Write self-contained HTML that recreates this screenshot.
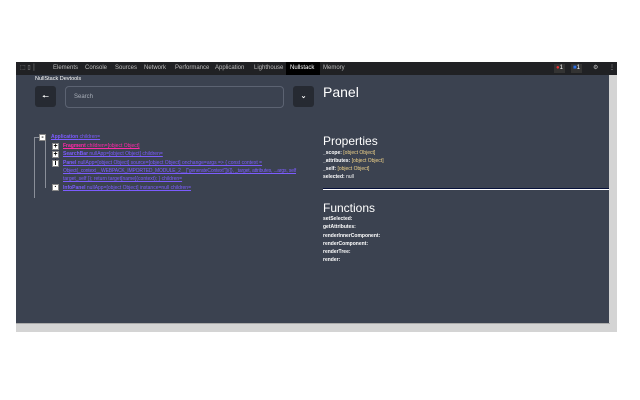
<!DOCTYPE html>
<html><head><meta charset="utf-8"><style>
*{margin:0;padding:0;box-sizing:border-box}
body{width:640px;height:400px;background:#fff;position:relative;font-family:"Liberation Sans",sans-serif;overflow:hidden}
.a{position:absolute}
.dk{left:16px;top:62px;width:601px;height:270px;background:#3b4250}
.tb{left:16px;top:62px;width:601px;height:13px;background:#202124;color:#bdbdbd;font-size:6px;line-height:13px}
.tb span{position:absolute;top:0}
.btn{background:#262a32;border-radius:3px}
.t{color:#7c5cff;font-size:5px;line-height:8.3px;text-decoration:underline;white-space:nowrap}
.t b{font-weight:bold}
.box{position:absolute;width:7px;height:7px;background:#fff;border:1px solid #888;font-size:7px;line-height:5px;text-align:center;color:#000;font-weight:bold}
.w{color:#fff;font-size:5px;font-weight:bold;line-height:8.3px}
.w span{color:#f3d58a;font-weight:normal}
</style></head><body>
<div class="a dk"></div>
<div class="a tb">
<span style="left:4px;color:#999">⬚ ▯ │</span>
<span style="left:37px">Elements</span><span style="left:69px">Console</span><span style="left:99px">Sources</span><span style="left:128px">Network</span><span style="left:159px">Performance</span><span style="left:199px">Application</span><span style="left:238px">Lighthouse</span>
<span style="left:270px;width:34px;background:#000;color:#fff;padding-left:4px">Nullstack</span><span style="left:307px">Memory</span>
<span style="left:538px;background:#333;padding:0 2px;line-height:9px;top:2px;color:#fff"><b style="color:#e33">●</b>1</span>
<span style="left:555px;background:#333;padding:0 2px;line-height:9px;top:2px;color:#fff"><b style="color:#2a6ee8">■</b>1</span>
<span style="left:577px">⚙</span><span style="left:593px">⋮</span>
</div>
<div class="a" style="left:609px;top:75px;width:8px;height:257px;background:#d4d4d4"></div>
<div class="a" style="left:16px;top:323px;width:601px;height:9px;background:#d4d4d4"></div>
<div class="a" style="left:16px;top:323px;width:594px;height:1px;background:#aaa"></div>
<div class="a" style="left:35px;top:75px;color:#fff;font-size:5.5px;line-height:9px">NullStack Devtools</div>
<div class="a btn" style="left:35px;top:86px;width:21px;height:21px;color:#fff;font-size:8px;text-align:center;line-height:21px">🠔</div>
<div class="a" style="left:65px;top:86px;width:219px;height:22px;border:1px solid #5c6372;border-radius:4px;color:#a9afb9;font-size:6px;line-height:20px;padding-left:8px">Search</div>
<div class="a btn" style="left:293px;top:86px;width:21px;height:21px;color:#fff;font-size:7px;text-align:center;line-height:21px;font-weight:bold">⌄</div>
<div class="a" style="left:323px;top:83px;color:#fff;font-size:14px;line-height:18px">Panel</div>
<div class="a" style="left:323px;top:134px;color:#fff;font-size:12px;line-height:14px">Properties</div>
<div class="a w" style="left:323px;top:149px;line-height:8px">_scope: <span>[object Object]</span><br>_attributes: <span>[object Object]</span><br>_self: <span>[object Object]</span><br>selected: <span style="color:#fff">null</span></div>
<div class="a" style="left:323px;top:188px;width:286px;height:1px;background:#06103a"></div>
<div class="a" style="left:323px;top:189px;width:286px;height:1px;background:#fff"></div>
<div class="a" style="left:323px;top:201px;color:#fff;font-size:12px;line-height:14px">Functions</div>
<div class="a w" style="left:323px;top:215px">setSelected:<br>getAttributes:<br>renderInnerComponent:<br>renderComponent:<br>renderTree:<br>render:</div>
<div class="a" style="left:34px;top:138px;width:1px;height:60px;background:#8a8f99"></div>
<div class="a" style="left:34px;top:137px;width:5px;height:1px;background:#8a8f99"></div>
<div class="a" style="left:45px;top:140px;width:1px;height:48px;background:#8a8f99"></div>
<div class="box" style="left:39px;top:134px">-</div>
<div class="box" style="left:52px;top:143px">+</div>
<div class="box" style="left:52px;top:151px">+</div>
<div class="box" style="left:52px;top:160px">i</div>
<div class="box" style="left:52px;top:184px">·</div>
<div class="a t" style="left:51px;top:133px"><b>Application</b> children=</div>
<div class="a t" style="left:63px;top:142px;color:#ff2aa8"><b>Fragment</b> children=[object Object]</div>
<div class="a t" style="left:63px;top:150px"><b>SearchBar</b> nullApp=[object Object] children=</div>
<div class="a t" style="left:63px;top:159px"><b>Panel</b> nullApp=[object Object] source=[object Object] onchange=args => { const context =</div>
<div class="a t" style="left:63px;top:167px;letter-spacing:-0.15px">Object(_context__WEBPACK_IMPORTED_MODULE_2__["generateContext"])({}, _target, attributes, ...args, self</div>
<div class="a t" style="left:63px;top:175px">target_self }); return target[name](context); } children=</div>
<div class="a t" style="left:63px;top:184px"><b>InfoPanel</b> nullApp=[object Object] instance=null children=</div>
</body></html>
